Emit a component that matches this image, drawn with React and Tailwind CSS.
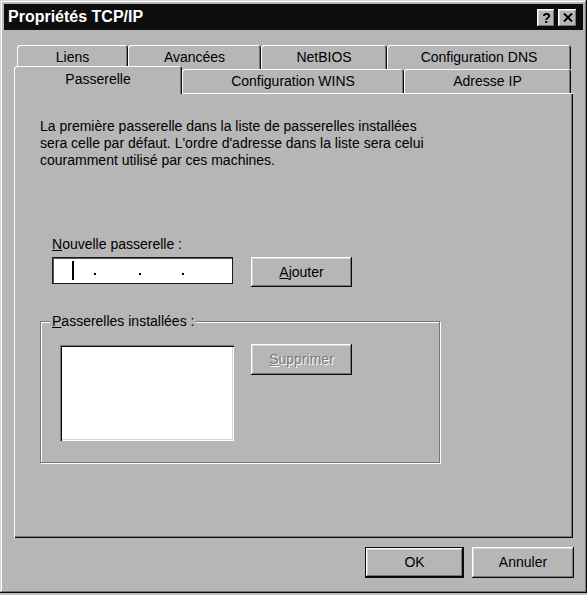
import React from "react";

const font = "font-['Liberation_Sans',Arial,sans-serif]";
const raised =
  "shadow-[inset_-1px_-1px_#0a0a0a,inset_1px_1px_#ffffff,inset_-2px_-2px_#777777,inset_2px_2px_#d6d6d6]";

function BackTab({ w, label }) {
  return (
    <div
      className={`${w} h-[24px] rounded-t-[3px] bg-[#b6b6b6] flex justify-center pt-[4px] text-[14px] leading-[17px] text-black shadow-[inset_1px_1px_#ffffff,inset_-1px_0_#0a0a0a,inset_-2px_0_#777777]`}
    >
      {label}
    </div>
  );
}

function Btn({ w, h, children, extra = "" }) {
  return (
    <div
      className={`${w} ${h} ${raised} bg-[#b6b6b6] flex items-center justify-center text-[14px] leading-[17px] ${extra}`}
    >
      {children}
    </div>
  );
}

export default function App() {
  return (
    <div className={`w-[587px] h-[595px] bg-[#bdbdbd] ${font} text-black`}>
      <div className="w-[587px] h-[593px] bg-[#b6b6b6] p-[4px] flex flex-col shadow-[inset_-1px_-1px_#0a0a0a,inset_1px_1px_#d6d6d6,inset_-2px_-2px_#777777,inset_2px_2px_#ffffff]">
        {/* Title bar */}
        <div className="h-[26px] bg-[#0d0d0d] flex items-center pl-[4px] pr-[6px]">
          <span className="text-white font-bold text-[16px] leading-[18px] flex-1">
            Propriétés TCP/IP
          </span>
          <div className="flex gap-[3px] items-center mt-[1px]">
            <div
              className={`w-[18px] h-[18px] ${raised} bg-[#b6b6b6] flex items-center justify-center font-bold text-[14px] leading-none pl-[1px]`}
            >
              ?
            </div>
            <div
              className={`w-[19px] h-[18px] ${raised} bg-[#b6b6b6] flex items-center justify-center`}
            >
              <svg width="10" height="9" viewBox="0 0 10 9">
                <path d="M1 0.5 L9 8.5 M9 0.5 L1 8.5" stroke="#000" strokeWidth="2" />
              </svg>
            </div>
          </div>
        </div>

        {/* Tabs */}
        <div className="mt-[15px] ml-[10px] w-[559px] flex flex-col">
          <div className="flex h-[24px] pl-[3px]">
            <BackTab w="w-[111px]" label="Liens" />
            <BackTab w="w-[133px]" label="Avancées" />
            <BackTab w="w-[126px]" label="NetBIOS" />
            <BackTab w="w-[184px]" label="Configuration DNS" />
          </div>
          <div className="flex h-[24px] items-end">
            <div className="relative z-10 w-[168px] h-[28px] -mb-[1px] rounded-t-[3px] bg-[#b6b6b6] flex justify-center pt-[5px] text-[14px] leading-[17px] shadow-[inset_1px_1px_#ffffff,inset_-1px_0_#0a0a0a,inset_-2px_0_#777777]">
              Passerelle
            </div>
            <div className="w-[222px] h-[24px] rounded-t-[3px] bg-[#b6b6b6] flex justify-center pt-[4px] text-[14px] leading-[17px] shadow-[inset_1px_1px_#ffffff,inset_-1px_0_#0a0a0a,inset_-2px_0_#777777]">
              Configuration WINS
            </div>
            <div className="w-[167px] h-[24px] rounded-t-[3px] bg-[#b6b6b6] flex justify-center pt-[4px] text-[14px] leading-[17px] shadow-[inset_1px_1px_#ffffff,inset_-1px_0_#0a0a0a,inset_-2px_0_#777777]">
              Adresse IP
            </div>
          </div>

          {/* Panel */}
          <div className="h-[445px] bg-[#b6b6b6] pt-[25px] pl-[26px] flex flex-col shadow-[inset_1px_1px_#ffffff,inset_-1px_-1px_#0a0a0a,inset_-2px_-2px_#777777]">
            <p className="text-[14px] leading-[17px]">
              La première passerelle dans la liste de passerelles installées
              <br />
              sera celle par défaut. L'ordre d'adresse dans la liste sera celui
              <br />
              couramment utilisé par ces machines.
            </p>

            <div className="ml-[12px] mt-[67px] flex flex-col">
              <div className="text-[14px] leading-[17px]">
                <span className="underline">N</span>ouvelle passerelle :
              </div>
              <div className="flex items-start mt-[4px]">
                <div className="w-[181px] h-[27px] bg-white border border-[#1a1a1a] shadow-[inset_1px_1px_#555555] flex items-center">
                  <span className="ml-[19px] w-[2px] h-[19px] bg-black" />
                  <span className="ml-[20px] mt-[7px] w-[2px] h-[2px] bg-black" />
                  <span className="ml-[43px] mt-[7px] w-[2px] h-[2px] bg-black" />
                  <span className="ml-[41px] mt-[7px] w-[2px] h-[2px] bg-black" />
                </div>
                <Btn w="w-[101px]" h="h-[30px]" extra="ml-[18px]">
                  <span>
                    <span className="underline">A</span>jouter
                  </span>
                </Btn>
              </div>
            </div>

            {/* Group box */}
            <div className="mt-[34px] w-[400px] h-[142px] border border-[#777777] shadow-[inset_1px_1px_#ffffff,1px_1px_#ffffff] flex flex-col">
              <div className="-mt-[9px] ml-[9px] px-[2px] w-fit bg-[#b6b6b6] text-[14px] leading-[17px]">
                <span className="underline">P</span>asserelles installées :
              </div>
              <div className="flex items-start mt-[15px] ml-[19px]">
                <div className="w-[174px] h-[96px] bg-white shadow-[inset_1px_1px_#777777,inset_2px_2px_#0a0a0a,inset_-1px_-1px_#ffffff,inset_-2px_-2px_#d6d6d6]" />
                <Btn w="w-[101px]" h="h-[31px]" extra="ml-[17px] -mt-[1px] text-[#7a7a7a]">
                  <span className="[text-shadow:1px_1px_0_#ffffff]">
                    <span className="underline">S</span>upprimer
                  </span>
                </Btn>
              </div>
            </div>
          </div>
        </div>

        {/* Footer buttons */}
        <div className="flex justify-end mt-[9px] pr-[9px] gap-[8px]">
          <div className="w-[99px] h-[31px] border border-[#0a0a0a] bg-[#b6b6b6] shadow-[inset_-1px_-1px_#0a0a0a,inset_1px_1px_#ffffff,inset_-2px_-2px_#777777,inset_2px_2px_#d6d6d6] flex items-center justify-center text-[14px] leading-[17px]">
            OK
          </div>
          <Btn w="w-[102px]" h="h-[31px]">Annuler</Btn>
        </div>
      </div>
    </div>
  );
}
